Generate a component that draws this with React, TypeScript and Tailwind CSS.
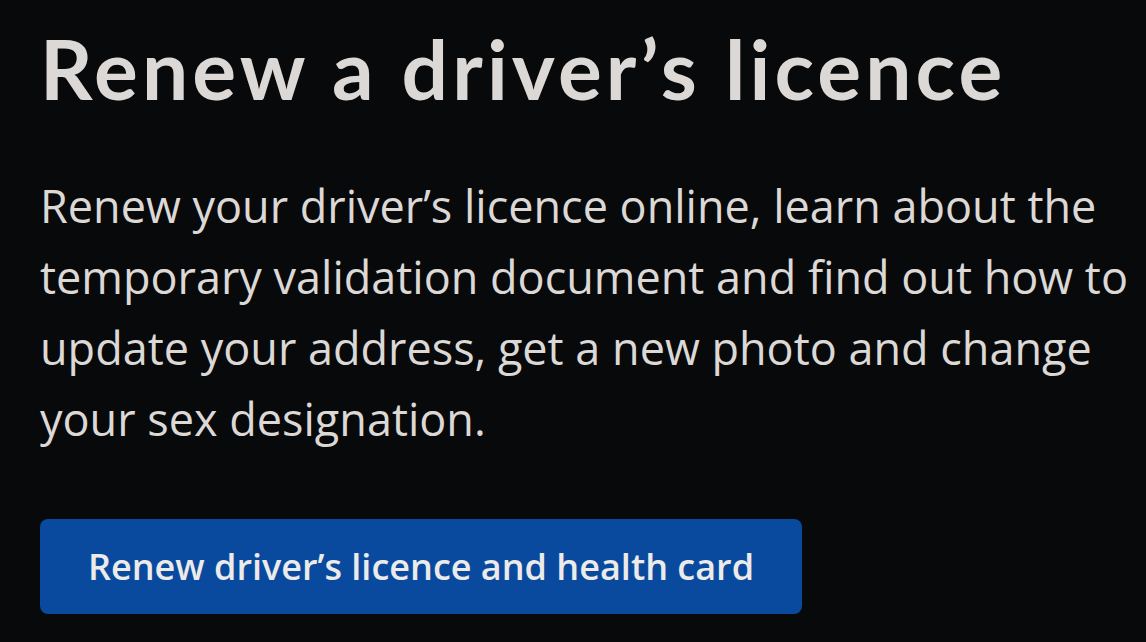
export default function App() {
  return (
    <div className="min-h-[642px] w-full bg-[#08090b] pl-[40px] pr-[6px] pt-[20px]">
      <h1 className="font-['Lato','Open_Sans',sans-serif] text-[82px] font-bold leading-[96px] tracking-[4.1px] text-[#dcd8d5]">
        Renew a driver’s licence
      </h1>
      <p className="mt-[54px] max-w-[1100px] font-['Open_Sans',sans-serif] text-[45px] leading-[71px] text-[#dcd8d5]">
        Renew your driver’s licence online, learn about the temporary validation document and find out how to update your address, get a new photo and change your sex designation.
      </p>
      <button className="mt-[65px] h-[95px] w-[762px] rounded-[8px] bg-[#0a4a9e] font-['Open_Sans',sans-serif] text-[36px] font-semibold text-[#ecebea]">
        Renew driver’s licence and health card
      </button>
    </div>
  );
}
